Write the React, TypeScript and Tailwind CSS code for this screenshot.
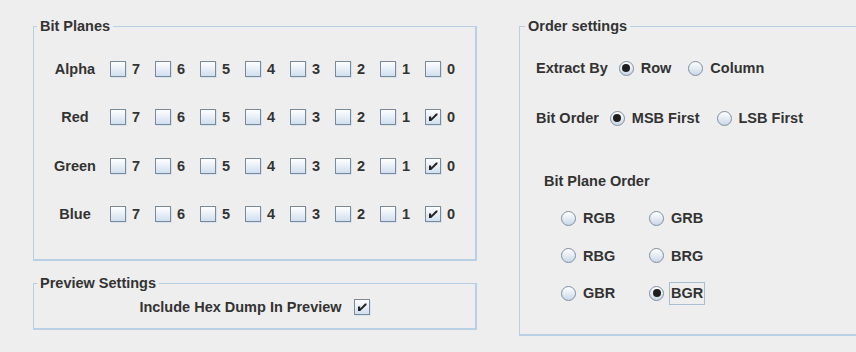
import React from "react";

function Check({ checked }: { checked?: boolean }) {
  return (
    <div className="w-[16px] h-[16px] shrink-0 border border-[#7a8a99] bg-linear-to-b from-white to-[#d0dfee] shadow-[1px_1px_0_#d6e2ee] flex items-center justify-center">
      {checked && (
        <svg width="14" height="14" viewBox="0 0 14 14">
          <path d="M3 6.5 H5.2 V8.5 L10 3.5 H11.5 V5 L5.2 11 H3 Z" fill="#222" />
        </svg>
      )}
    </div>
  );
}

function Radio({ checked }: { checked?: boolean }) {
  return (
    <div className="w-[15px] h-[15px] shrink-0 rounded-full border border-[#7f8f9f] bg-linear-to-b from-white to-[#c9d8e8] flex items-center justify-center">
      {checked && <div className="w-[8px] h-[8px] rounded-full bg-[#1e1e1e]" />}
    </div>
  );
}

const rows: { name: string; checked: number[] }[] = [
  { name: "Alpha", checked: [] },
  { name: "Red", checked: [0] },
  { name: "Green", checked: [0] },
  { name: "Blue", checked: [0] },
];
const rowH = ["h-[49px]", "h-[48px]", "h-[49px]", "h-[48px]"];
const bits = [7, 6, 5, 4, 3, 2, 1, 0];

export default function App() {
  return (
    <div className="w-[856px] h-[352px] bg-[#eeeeee] overflow-hidden flex pl-[33px] pt-[18px] font-['Liberation_Sans',Arial,sans-serif] font-bold text-[#333333] text-[14.5px] leading-[16px]">
      <div className="flex flex-col w-[444px] shrink-0">
        <fieldset className="h-[243px] border-t border-l border-r-2 border-b-2 border-[#b8cfe5]">
          <legend className="ml-[3px] px-[3px] leading-[16px]">Bit Planes</legend>
          <div className="pt-[10px] flex flex-col">
            {rows.map((r, i) => (
              <div key={r.name} className={`${rowH[i]} flex items-center pl-[6px]`}>
                <div className="w-[70px] text-center">{r.name}</div>
                {bits.map((b) => (
                  <div key={b} className="w-[45px] flex items-center gap-[6px]">
                    <Check checked={r.checked.includes(b)} />
                    <span>{b}</span>
                  </div>
                ))}
              </div>
            ))}
          </div>
        </fieldset>
        <fieldset className="mt-[14px] h-[55px] border-t border-l border-r-2 border-b-2 border-[#b8cfe5]">
          <legend className="ml-[3px] px-[3px] leading-[16px]">Preview Settings</legend>
          <div className="h-[32px] flex items-center justify-center gap-[12px]">
            <span>Include Hex Dump In Preview</span>
            <Check checked />
          </div>
        </fieldset>
      </div>
      <fieldset className="ml-[42px] w-[345px] shrink-0 h-[318px] border-t border-l border-r-2 border-b-2 border-[#b8cfe5]">
        <legend className="ml-[5px] px-[3px] leading-[16px]">Order settings</legend>
        <div className="pl-[16px] flex flex-col">
          <div className="mt-[24px] h-[20px] flex items-center">
            <span>Extract By</span>
            <div className="ml-[11px]"><Radio checked /></div>
            <span className="ml-[7px]">Row</span>
            <div className="ml-[17px]"><Radio /></div>
            <span className="ml-[7px]">Column</span>
          </div>
          <div className="mt-[30px] h-[20px] flex items-center">
            <span>Bit Order</span>
            <div className="ml-[11px]"><Radio checked /></div>
            <span className="ml-[7px]">MSB First</span>
            <div className="ml-[17px]"><Radio /></div>
            <span className="ml-[7px]">LSB First</span>
          </div>
          <div className="mt-[43px] h-[20px] flex items-center pl-[8px]">Bit Plane Order</div>
          <div className="mt-[15px] flex flex-col gap-[13.5px] pl-[25px]">
            {[
              ["RGB", "GRB"],
              ["RBG", "BRG"],
              ["GBR", "BGR"],
            ].map((pair) => (
              <div key={pair[0]} className="h-[24px] flex items-center">
                <div className="w-[88px] flex items-center">
                  <Radio />
                  <span className="ml-[7px]">{pair[0]}</span>
                </div>
                <div className="flex items-center">
                  <Radio checked={pair[1] === "BGR"} />
                  {pair[1] === "BGR" ? (
                    <span className="ml-[5px] h-[23px] px-[1px] border border-[#a9bdd0] flex items-center">{pair[1]}</span>
                  ) : (
                    <span className="ml-[7px]">{pair[1]}</span>
                  )}
                </div>
              </div>
            ))}
          </div>
        </div>
      </fieldset>
    </div>
  );
}
